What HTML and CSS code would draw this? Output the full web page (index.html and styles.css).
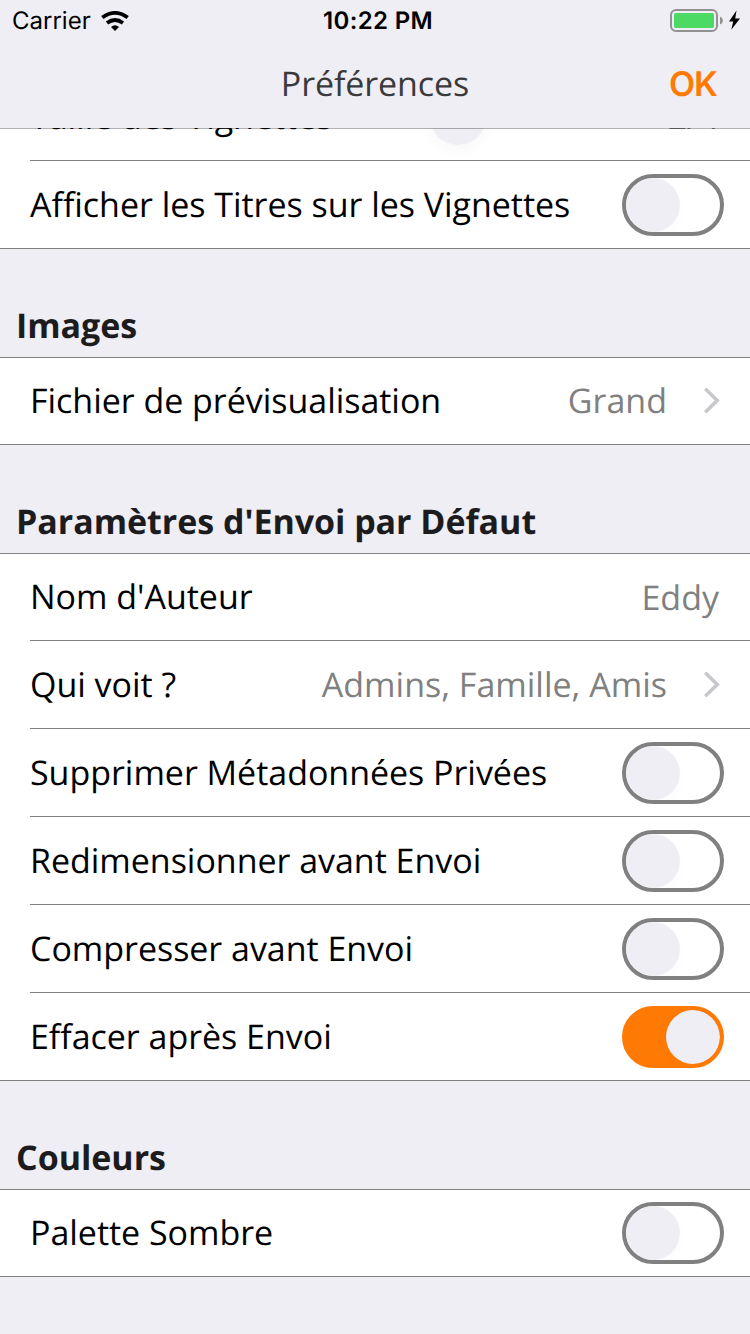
FILE: index.html
```html
<!DOCTYPE html>
<html lang="fr">
<head>
<meta charset="utf-8">
<title>Préférences</title>
<link rel="stylesheet" href="styles.css">
</head>
<body>
<header class="top">
  <div class="status">
    <div class="carrier"><span>Carrier</span>
      <svg class="wifi" width="28" height="20" viewBox="0 0 28 20"><g fill="none" stroke="#000" stroke-width="3.7"><path d="M1.3 6.6Q14-2.9 26.7 6.6"/><path d="M6 11.9Q14 6.1 22 11.9"/></g><path d="M10 16.1Q14 12.3 18 16.1L14 20Z"/></svg>
    </div>
    <div class="clock">10:22 PM</div>
    <div class="power">
      <svg width="70" height="24" viewBox="0 0 70 24"><rect x="1" y="1" width="46" height="21" rx="5" fill="none" stroke="#929295" stroke-width="2"/><rect x="4" y="4" width="40" height="15" rx="1.8" fill="#4cd964"/><path d="M50 7.5Q53 9 53 11.5T50 15.5Z" fill="#929295"/><path d="M66.5 1.5L59 12.4H63.2L61.3 20.8L70 9.5H65.2Z"/></svg>
    </div>
  </div>
  <nav class="nav"><span></span><h1 class="title">Préférences</h1><a class="ok">OK</a></nav>
</header>
<main class="list">
  <section class="group">
    <div class="row"><span class="label">Taille des Vignettes</span><span class="thumb"></span><span class="value">2/4</span></div>
    <div class="row"><span class="label">Afficher les Titres sur les Vignettes</span><span class="switch"></span></div>
  </section>
  <h2 class="heading">Images</h2>
  <section class="group lined">
    <div class="row"><span class="label">Fichier de prévisualisation</span><span class="value">Grand</span><svg class="chevron" width="16" height="26" viewBox="0 0 16 26"><path d="M1.2 1.2L13.2 13L1.2 24.8"/></svg></div>
  </section>
  <h2 class="heading">Paramètres d'Envoi par Défaut</h2>
  <section class="group lined">
    <div class="row"><span class="label">Nom d'Auteur</span><span class="value low">Eddy</span></div>
    <div class="row"><span class="label">Qui voit ?</span><span class="value">Admins, Famille, Amis</span><svg class="chevron" width="16" height="26" viewBox="0 0 16 26"><path d="M1.2 1.2L13.2 13L1.2 24.8"/></svg></div>
    <div class="row"><span class="label">Supprimer Métadonnées Privées</span><span class="switch"></span></div>
    <div class="row"><span class="label">Redimensionner avant Envoi</span><span class="switch"></span></div>
    <div class="row"><span class="label">Compresser avant Envoi</span><span class="switch"></span></div>
    <div class="row"><span class="label">Effacer après Envoi</span><span class="switch on"></span></div>
  </section>
  <h2 class="heading">Couleurs</h2>
  <section class="group lined">
    <div class="row"><span class="label">Palette Sombre</span><span class="switch"></span></div>
  </section>
</main>
</body>
</html>
```
FILE: styles.css
```css
* { box-sizing: border-box; }
body { margin: 0; height: 1334px; overflow: hidden; background: #efeef4; color: #000; font-family: "Open Sans", sans-serif; font-size: 34px; text-rendering: geometricPrecision; }

/* Header; its hairline is translucent over the scrolled list */
.top { position: relative; z-index: 1; height: 128px; background: #efeef4; box-shadow: 0 1px rgba(0, 0, 0, .3); }
.status { display: grid; grid-template-columns: 1fr auto 1fr; align-items: center; height: 40px; padding: 0 10px 0 12px; font: 400 24px/40px Inter, sans-serif; }
.carrier { display: flex; align-items: center; gap: 12px; }
.carrier span { width: 77px; letter-spacing: 0; padding-top: 1px; }
.wifi { display: block; }
.clock { font-weight: 600; letter-spacing: .35px; margin-left: 4px; padding-top: 1px; }
.power { display: flex; justify-content: flex-end; }
.power svg { display: block; margin-top: 1px; }
.nav { display: grid; grid-template-columns: 1fr auto 1fr; height: 88px; line-height: 87px; padding: 0 33px; }
.title { margin: 0; font-size: 34px; font-weight: 400; letter-spacing: -.1px; color: #3a3a3c; }
.ok { justify-self: end; color: #ff7a05; font: 600 34px/89px Inter, sans-serif; letter-spacing: -1px; }

.list { margin-top: -55px; }
.group { background: #fff; }
.lined { border-top: 1px solid #808080; }
.row { display: flex; align-items: center; height: 88px; padding: 0 26px 1px 30px; background: linear-gradient(#808080, #808080) 30px 100% / 100% 1px no-repeat; }
.lined .row:first-child { height: 87px; }
.row:last-child { background-position: 0 100%; }
.label { flex: 1; white-space: nowrap; padding-bottom: 2px; letter-spacing: -.03px; }
.value { color: #808080; margin-right: 5px; padding-bottom: 2px; }
.low { padding-bottom: 0; }
.chevron { margin: 0 4px 0 32px; fill: none; stroke: #c7c7cc; stroke-width: 3.6; transform: translateY(-.5px); }
.heading { margin: 0; height: 108px; padding: 53px 16px 0; font-size: 34px; line-height: 46px; font-weight: 700; letter-spacing: -.04px; color: #1c1c1e; }
.thumb { width: 56px; height: 56px; border-radius: 50%; background: #efeef4; box-shadow: 0 6px 16px rgba(0, 0, 0, .03); margin-right: 182px; }

.switch { display: flex; width: 102px; height: 62px; border: 4px solid #808080; border-radius: 31px; overflow: hidden; }
.switch::before { content: ""; width: 54px; height: 54px; border-radius: 50%; background: #efeef4; box-shadow: 0 6px 16px rgba(0, 0, 0, .015); }
.on { justify-content: flex-end; background: #ff7a05; border-color: #ff7a05; }
```
